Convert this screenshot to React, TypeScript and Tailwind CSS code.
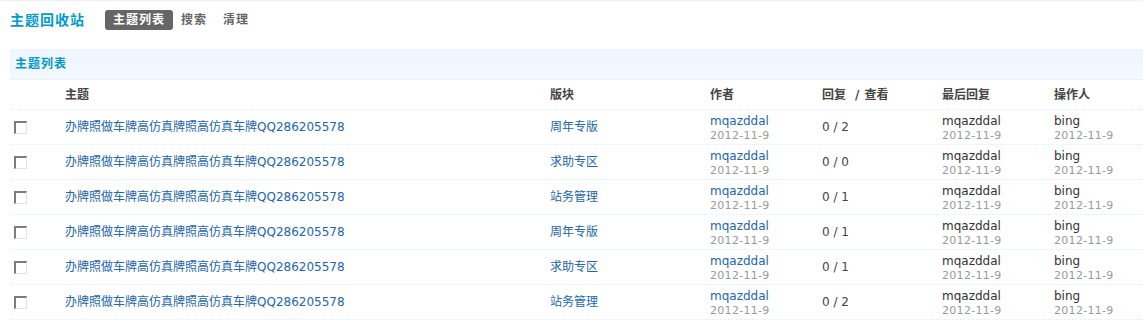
const rows = [
  { forum: '周年专版', views: '0 / 2' },
  { forum: '求助专区', views: '0 / 0' },
  { forum: '站务管理', views: '0 / 1' },
  { forum: '周年专版', views: '0 / 1' },
  { forum: '求助专区', views: '0 / 1' },
  { forum: '站务管理', views: '0 / 2' },
]

const cols =
  'grid grid-cols-[55px_485px_160px_112px_120px_112px_1fr] items-center border-b border-dotted border-[#deeffb]'

function UserCell({ name, link }: { name: string; link?: boolean }) {
  return (
    <div className="flex flex-col pt-[1px]">
      <span
        className={`text-[12px] leading-[15px] ${link ? 'text-[#2366a8]' : 'text-[#333]'}`}
      >
        {name}
      </span>
      <span className="text-[11px] leading-[13px] tracking-[0.3px] text-[#999]">
        2012-11-9
      </span>
    </div>
  )
}

export default function App() {
  return (
    <div
      className="min-h-[322px] bg-white pl-[10px] text-[12px] text-[#333] shadow-[inset_0_2px_2px_-1px_#eeeeee]"
      style={{ fontFamily: '"DejaVu Sans", "Noto Sans CJK SC", sans-serif' }}
    >
      <div className="flex h-[30px] items-end">
        <div className="flex h-[20px] items-center">
          <h3 className="w-[95px] text-[14px] font-bold tracking-[1px] text-[#0099cc]">
            主题回收站
          </h3>
          <nav className="flex items-center text-[12px] font-bold tracking-[1px]">
            <span className="flex h-[20px] items-center rounded-[3px] bg-[#666] px-[8px] text-white">
              主题列表
            </span>
            <span className="px-[8px] text-[#666]">搜索</span>
            <span className="px-[8px] text-[#666]">清理</span>
          </nav>
        </div>
      </div>

      <div className="mt-[19px] flex h-[31px] items-center border-b border-dotted border-[#deeffb] bg-gradient-to-b from-[#eef5fc] to-[#f3f9fe] pl-[5px] text-[12px] font-bold tracking-[1px] text-[#0099cc]">
        主题列表
      </div>

      <div className={`${cols} h-[30px] font-bold text-[#444]`}>
        <span />
        <span>主题</span>
        <span>版块</span>
        <span>作者</span>
        <span>
          回复<span className="ml-[9px]">/</span>
          <span className="ml-[5px]">查看</span>
        </span>
        <span>最后回复</span>
        <span>操作人</span>
      </div>

      {rows.map((r, i) => (
        <div key={i} className={`${cols} h-[35px]`}>
          <span className="pl-[4px]">
            <input
              type="checkbox"
              className="block h-[13px] w-[13px] appearance-none border-t-2 border-l-2 border-r border-b border-t-[#7c7c7c] border-l-[#7c7c7c] border-r-[#e3e3e3] border-b-[#e3e3e3] bg-white"
            />
          </span>
          <a className="text-[#2366a8]">办牌照做车牌高仿真牌照高仿真车牌QQ286205578</a>
          <a className="text-[#2366a8]">{r.forum}</a>
          <UserCell name="mqazddal" link />
          <span className="text-[#444]">{r.views}</span>
          <UserCell name="mqazddal" />
          <UserCell name="bing" />
        </div>
      ))}
    </div>
  )
}
